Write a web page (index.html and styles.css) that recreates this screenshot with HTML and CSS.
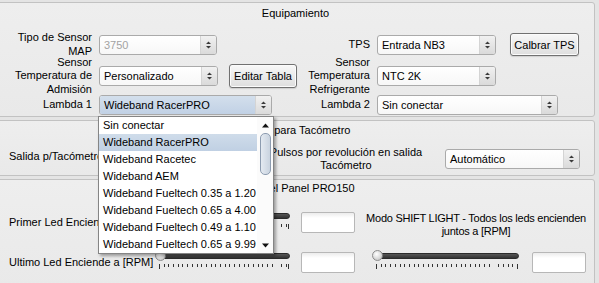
FILE: index.html
```html
<!DOCTYPE html>
<html>
<head>
<meta charset="utf-8">
<title>Equipamiento</title>
<link rel="stylesheet" href="styles.css">
</head>
<body>
<div class="window">
  <section class="group equip">
    <div class="group-title">Equipamiento</div>
    <div class="equip-grid">
      <div class="lbl">Tipo de Sensor<br>MAP</div>
      <div class="combo disabled w118"><span class="val">3750</span><span class="arrow"><svg width="7" height="10" viewBox="0 0 7 10"><path d="M3.5 1.5L6 4H1Z M1 6H6L3.5 8.5Z" fill="#3a3a3a"/></svg></span></div>
      <div></div>
      <div class="lbl">TPS</div>
      <div class="combo w119"><span class="val">Entrada NB3</span><span class="arrow"><svg width="7" height="10" viewBox="0 0 7 10"><path d="M3.5 1.5L6 4H1Z M1 6H6L3.5 8.5Z" fill="#3a3a3a"/></svg></span></div>
      <button class="btn btn-tps">Calbrar TPS</button>

      <div class="lbl">Sensor<br>Temperatura de<br>Admisión</div>
      <div class="combo w119"><span class="val">Personalizado</span><span class="arrow"><svg width="7" height="10" viewBox="0 0 7 10"><path d="M3.5 1.5L6 4H1Z M1 6H6L3.5 8.5Z" fill="#3a3a3a"/></svg></span></div>
      <button class="btn btn-tabla">Editar Tabla</button>
      <div class="lbl">Sensor<br>Temperatura<br>Refrigerante</div>
      <div class="combo w119"><span class="val">NTC 2K</span><span class="arrow"><svg width="7" height="10" viewBox="0 0 7 10"><path d="M3.5 1.5L6 4H1Z M1 6H6L3.5 8.5Z" fill="#3a3a3a"/></svg></span></div>
      <div></div>

      <div class="lbl">Lambda 1</div>
      <div class="combo active w173 span2">
        <span class="val">Wideband RacerPRO</span><span class="arrow"><svg width="7" height="10" viewBox="0 0 7 10"><path d="M3.5 1.5L6 4H1Z M1 6H6L3.5 8.5Z" fill="#3a3a3a"/></svg></span>
        <div class="popup">
          <ul class="items">
            <li class="item">Sin conectar</li>
            <li class="item sel">Wideband RacerPRO</li>
            <li class="item">Wideband Racetec</li>
            <li class="item">Wideband AEM</li>
            <li class="item">Wideband Fueltech 0.35 a 1.20</li>
            <li class="item">Wideband Fueltech 0.65 a 4.00</li>
            <li class="item">Wideband Fueltech 0.49 a 1.10</li>
            <li class="item">Wideband Fueltech 0.65 a 9.99</li>
          </ul>
          <div class="scroll">
            <span class="sarrow"><svg width="7" height="5" viewBox="0 0 7 5"><path d="M0 4.5L3.5 0.5L7 4.5Z" fill="#111"/></svg></span>
            <span class="thumb"></span>
            <span class="sfill"></span>
            <span class="sarrow"><svg width="7" height="5" viewBox="0 0 7 5"><path d="M0 0.5L3.5 4.5L7 0.5Z" fill="#111"/></svg></span>
          </div>
        </div>
      </div>
      <div class="lbl">Lambda 2</div>
      <div class="combo w181 span2"><span class="val">Sin conectar</span><span class="arrow"><svg width="7" height="10" viewBox="0 0 7 10"><path d="M3.5 1.5L6 4H1Z M1 6H6L3.5 8.5Z" fill="#3a3a3a"/></svg></span></div>
    </div>
  </section>

  <section class="group taco">
    <div class="group-title">Salida para Tacómetro</div>
    <div class="taco-row">
      <div class="plain taco-lbl">Salida p/Tacómetro</div>
      <div class="combo w150 hidden-combo"><span class="val"></span><span class="arrow"><svg width="7" height="10" viewBox="0 0 7 10"><path d="M3.5 1.5L6 4H1Z M1 6H6L3.5 8.5Z" fill="#3a3a3a"/></svg></span></div>
      <div class="center-lbl">Pulsos por revolución en salida<br>Tacómetro</div>
      <div class="combo w135 auto-combo"><span class="val">Automático</span><span class="arrow"><svg width="7" height="10" viewBox="0 0 7 10"><path d="M3.5 1.5L6 4H1Z M1 6H6L3.5 8.5Z" fill="#3a3a3a"/></svg></span></div>
    </div>
  </section>

  <section class="group panel">
    <div class="group-title">Leds del Panel PRO150</div>
    <div class="panel-grid">
      <div class="plain">Primer Led Enciende a [RPM]</div>
      <div class="slider s135"><div class="track"><span class="handle"></span></div><div class="ticks"></div></div>
      <div class="edit"></div>
      <div class="center-lbl modo">Modo SHIFT LIGHT - Todos los leds encienden<br>juntos a [RPM]</div>

      <div class="plain">Ultimo Led Enciende a [RPM]</div>
      <div class="slider s135"><div class="track"><span class="handle"></span></div><div class="ticks"></div></div>
      <div class="edit"></div>
      <div class="slider s147"><div class="track"><span class="handle"></span></div><div class="ticks"></div></div>
      <div class="edit"></div>
    </div>
  </section>
</div>
</body>
</html>
```

FILE: styles.css
```css
* { box-sizing: border-box; }
html, body { margin: 0; padding: 0; }
body {
  width: 599px;
  height: 283px;
  overflow: hidden;
  background: #e4e4e4;
  font-family: "Liberation Sans", Arial, sans-serif;
  font-size: 11px;
  color: #000;
}
.window {
  margin: 2px 4px 0 -4px;
  display: flex;
  flex-direction: column;
  gap: 3px;
}
.group {
  border: 1px solid #c2c2c2;
  border-radius: 3px;
  background: linear-gradient(#eeeeee, #e9e9e9);
}
.group-title {
  text-align: center;
  line-height: 14px;
  height: 14px;
}
.equip .group-title { margin: 3px 0 11px; }
.taco .group-title { margin: 2px 0 7px; }
.panel .group-title { margin: 1px 0 12px; }

/* Equipamiento */
.equip-grid {
  display: grid;
  grid-template-columns: 91px 130px 76px 72px 133px 69px;
  grid-template-rows: 27px 36px 22px;
  padding-left: 11px;
  align-items: center;
}
.lbl {
  text-align: right;
  padding-right: 7px;
  line-height: 13.5px;
  white-space: nowrap;
}
.span2 { grid-column: span 2; }

/* combo box */
.combo {
  position: relative;
  display: flex;
  height: 20px;
  border: 1px solid #aaaaaa;
  border-radius: 3px;
  background: linear-gradient(#ffffff, #f7f7f7);
}
.combo .val {
  flex: 1;
  padding-left: 4px;
  line-height: 18px;
  white-space: nowrap;
  overflow: hidden;
}
.combo.disabled .val { color: #a3a3a3; }
.combo .arrow {
  width: 16px;
  flex: none;
  border-left: 1px solid #d4d4d4;
  border-radius: 0 2px 2px 0;
  background: linear-gradient(#f1f1f1, #dadada);
  display: flex;
  align-items: center;
  justify-content: center;
}
.combo.active .val {
  background: linear-gradient(#d3dfec, #c1d1e5);
  border-radius: 2px 0 0 2px;
}
.w118 { width: 118px; }
.w119 { width: 119px; }
.w135 { width: 135px; }
.w150 { width: 150px; }
.w173 { width: 173px; }
.w181 { width: 181px; }

/* buttons */
.btn {
  font: inherit;
  color: #000;
  padding: 0;
  border: 1px solid #717171;
  border-radius: 3px;
  background: linear-gradient(#f8f8f8, #dedede);
  box-shadow: inset 0 0 0 1px #fbfbfb, 0 1px 1px rgba(0,0,0,0.12);
}
.btn-tps { width: 69px; height: 23px; }
.btn-tabla { width: 68px; height: 24px; }

/* popup list */
.popup {
  position: absolute;
  left: -2px;
  top: 20px;
  width: 176px;
  height: 138px;
  z-index: 10;
  display: flex;
  background: #ffffff;
  border: 1px solid #858585;
  box-shadow: 2px 2px 3px rgba(0,0,0,0.35);
}
.items {
  list-style: none;
  margin: 0;
  padding: 0;
  flex: 1;
}
.item {
  height: 17px;
  line-height: 17px;
  padding-left: 4px;
  white-space: nowrap;
}
.item.sel { background: linear-gradient(#cfdcea, #c0d0e3); }
.scroll {
  width: 16px;
  flex: none;
  display: flex;
  flex-direction: column;
  align-items: center;
  background: #fbfbfb;
}
.sarrow {
  height: 16px;
  display: flex;
  align-items: center;
  justify-content: center;
}
.thumb {
  width: 11px;
  height: 42px;
  border: 1px solid #8d9cb0;
  border-radius: 5px;
  background: linear-gradient(to right, #e4eaf1, #c9d3df);
}
.sfill { flex: 1; }

/* Tacometro */
.taco-row {
  display: grid;
  grid-template-columns: 98px 160px 158px 20px 135px;
  height: 30px;
  margin-bottom: 1px;
  padding-left: 12px;
  align-items: center;
}
.taco-lbl { margin-bottom: 6px; }
.hidden-combo { margin-left: 3px; }
.auto-combo { grid-column: 5; }
.plain { white-space: nowrap; }
.center-lbl {
  text-align: center;
  line-height: 13px;
  white-space: nowrap;
}

/* Panel */
.panel-grid {
  display: grid;
  grid-template-columns: 146px 146px 71px 160px 54px;
  grid-template-rows: 30px 30px;
  row-gap: 10px;
  padding-left: 12px;
  padding-bottom: 10px;
  align-items: center;
}
.modo {
  grid-column: 4 / span 2;
  padding-top: 6px;
  margin-left: -6px;
  letter-spacing: -0.25px;
}
.edit {
  width: 54px;
  height: 21px;
  border: 1px solid #b7b7b7;
  border-radius: 2px;
  background: linear-gradient(#ececec, #ffffff 5px);
}
.slider {
  display: flex;
  flex-direction: column;
  margin-bottom: 5px;
}
.s135 { width: 135px; }
.s147 { width: 147px; }
.track {
  position: relative;
  height: 6px;
  margin: 2px 0 0 2px;
  border: 1px solid #2b2b2b;
  border-radius: 3px;
  background: linear-gradient(#565656, #333333);
}
.handle {
  position: absolute;
  left: -3px;
  top: -4px;
  width: 11px;
  height: 11px;
  border-radius: 50%;
  border: 1px solid #8c8c8c;
  background: radial-gradient(circle at 40% 35%, #ffffff, #d0d0d0 70%, #b8b8b8);
}
.ticks {
  height: 5px;
  margin: 5px 1px 0 4px;
  border-left: 1px solid #333;
  border-right: 1px solid #333;
  background: repeating-linear-gradient(to right, transparent 0 3.7px, #333 3.7px 4.7px) top left / 100% 3px no-repeat;
}
```
